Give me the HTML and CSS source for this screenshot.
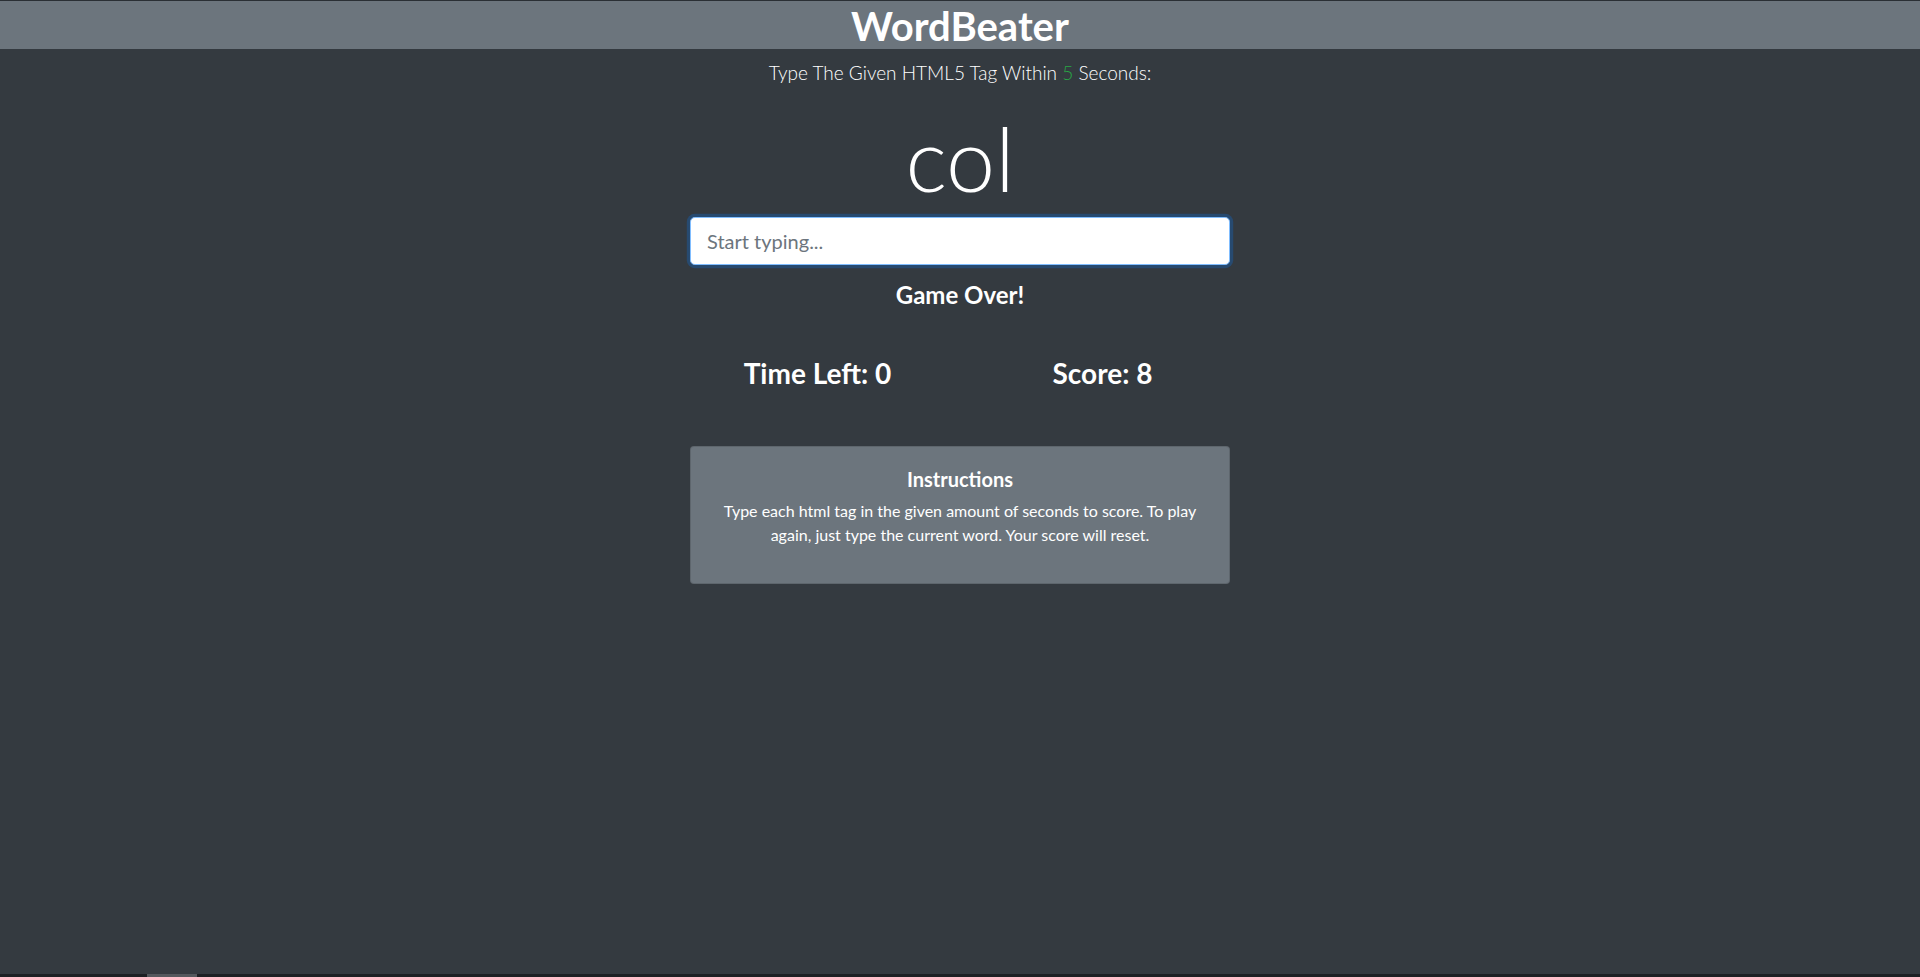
FILE: index.html
```html
<!DOCTYPE html>
<html lang="en">
<head>
<meta charset="utf-8">
<title>WordBeater</title>
<link rel="stylesheet" href="styles.css">
</head>
<body>
<div class="page">
  <header class="topbar">
    <h1 class="brand">WordBeater</h1>
  </header>
  <main class="main">
    <div class="column">
      <p class="lead">Type The Given HTML5 Tag Within <span class="seconds">5</span> Seconds:</p>
      <h2 class="word">col</h2>
      <input class="typing" type="text" placeholder="Start typing..." autofocus>
      <h4 class="message">Game Over!</h4>
      <div class="stats">
        <h3 class="stat">Time Left: <span>0</span></h3>
        <h3 class="stat">Score: <span>8</span></h3>
      </div>
      <div class="card">
        <h5 class="card-title">Instructions</h5>
        <p class="card-text">Type each html tag in the given amount of seconds to score. To play<br>again, just type the current word. Your score will reset.</p>
      </div>
    </div>
  </main>
  <div class="bottombar"><span class="bottom-seg"></span></div>
</div>
</body>
</html>
```

FILE: styles.css
```css
* { box-sizing: border-box; }
html, body { margin: 0; padding: 0; }
body {
  background: #343a40;
  color: #fff;
  font-family: Lato, "Open Sans", sans-serif;
}
.page {
  height: 100vh;
  display: flex;
  flex-direction: column;
}
.topbar {
  background: #6c757d;
  border-top: 1px solid #2a2f34;
  height: 49px;
}
.brand {
  margin: 0;
  padding-top: 3px;
  height: 48px;
  font-size: 40px;
  font-weight: 700;
  line-height: 44px;
  text-align: center;
}
.main {
  flex: 1;
  padding-top: 9px;
}
.column {
  width: 540px;
  margin: 0 auto;
  text-align: center;
}
.lead {
  margin: 0 0 15px;
  font-size: 19px;
  font-weight: 300;
  line-height: 30px;
}
.seconds { color: #28a745; }
.word {
  margin: 0 0 5px;
  padding-top: 3px;
  font-size: 88px;
  font-weight: 300;
  line-height: 105.6px;
}
.typing {
  display: block;
  width: 100%;
  height: 48px;
  margin: 0 0 16px;
  padding: 8px 16px;
  font-family: inherit;
  font-size: 20px;
  line-height: 1.5;
  color: #495057;
  background: #fff;
  border: 1px solid #80bdff;
  border-radius: 4.8px;
  box-shadow: 0 0 0 3.2px rgba(0, 123, 255, 0.25);
  outline: none;
}
.typing::placeholder { color: #6c757d; opacity: 1; }
.message {
  margin: 0;
  font-size: 24px;
  font-weight: 700;
  line-height: 28.8px;
}
.stats {
  display: grid;
  grid-template-columns: 1fr 1fr;
  margin: 48px -15px 0;
}
.stat {
  margin: 0;
  font-size: 28px;
  font-weight: 700;
  line-height: 33.6px;
}
.card {
  margin-top: 55px;
  background: #6c757d;
  border: 1px solid rgba(0, 0, 0, 0.125);
  border-radius: 4px;
  padding: 20px;
}
.card-title {
  margin: 0 0 8px;
  font-size: 20px;
  font-weight: 700;
  line-height: 24px;
}
.card-text {
  margin: 0 0 16px;
  font-size: 16px;
  line-height: 24px;
}
.bottombar {
  height: 3px;
  background: #1d2024;
  display: flex;
}
.bottom-seg {
  margin-left: 147px;
  width: 50px;
  background: #54585d;
}
```
